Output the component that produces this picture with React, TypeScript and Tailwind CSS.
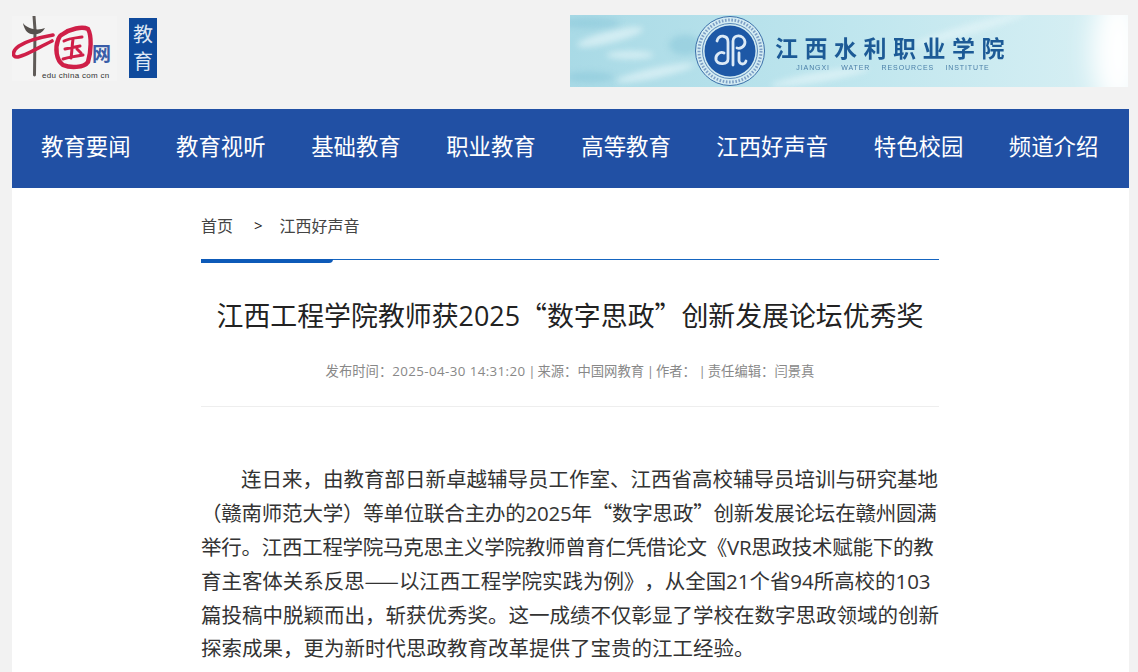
const NAV = ["教育要闻", "教育视听", "基础教育", "职业教育", "高等教育", "江西好声音", "特色校园", "频道介绍"];

const SANS = "font-['Segoe_UI','Open_Sans','Noto_Sans_CJK_SC',sans-serif]";
const CJK = "font-['Noto_Sans_CJK_SC',sans-serif]";

function ChinaLogo() {
  return (
    <svg width="105" height="65" viewBox="12 16 105 65" className="block">
      {/* grey post and hat */}
      <path d="M34 16 L35 30 L34.5 75" stroke="#5f5a57" strokeWidth="3" fill="none" strokeLinecap="round" />
      <path d="M23 23 C27 29 38 31 45 28 C42 34 36 35 31 34 C27 33 24 29 23 23Z" fill="#55504d" />
      {/* red brush sweep */}
      <path d="M53 35 C42 37 28 40 19 46 C12 51 12 57 17 57 C23 57 34 50 52 41" stroke="#cf1f48" strokeWidth="3.6" fill="none" strokeLinecap="round" />
      {/* red seal square */}
      <path d="M63 34 C70 29 82 26 88 29 C92 36 91 52 88 62 C84 68 70 68 63 65 C56 60 55 48 58 40 C59 37 60 35 63 34" stroke="#cf1f48" strokeWidth="4.4" fill="none" strokeLinecap="round" />
      <path d="M64 41 C70 38 76 38 82 37 M73 39 C72 46 72 52 71 58 M65 49 L80 46 M63 59 C70 57 76 56 83 55 M77 49 L81 53" stroke="#cf1f48" strokeWidth="3" fill="none" strokeLinecap="round" />
    </svg>
  );
}

function Seal() {
  return (
    <svg width="72" height="72" viewBox="0 0 72 72" className="block shrink-0">
      <circle cx="36" cy="36" r="34.5" fill="#d4ecf3" stroke="#3a6ea8" strokeWidth="1" />
      <circle cx="36" cy="36" r="31" fill="none" stroke="#7d9fc6" strokeWidth="3" strokeDasharray="1.6 1.6" />
      <circle cx="36" cy="36" r="27.5" fill="none" stroke="#3a6ea8" strokeWidth="0.8" />
      <circle cx="36" cy="36" r="25.5" fill="#1d58a6" />
      <path
        d="M23 26 C25 19 34 20 34 27 L34 44 C34 50 24 50 22 45 C21 40 26 36 30 38 M39 50 L39 26 C39 19 50 19 51 27 C51 32 46 34 43 33 M45 38 L45 46 C46 50 51 50 52 46"
        stroke="#dceaf6"
        strokeWidth="2.8"
        fill="none"
        strokeLinecap="round"
      />
    </svg>
  );
}

function Banner() {
  return (
    <div className="relative w-[558px] h-[72px] overflow-hidden bg-gradient-to-r from-[#a9dae6] via-[#bfe6ee] to-[#d9f0f4]">
      <svg width="558" height="72" viewBox="0 0 558 72" className="absolute inset-0">
        <defs>
          <filter id="soft">
            <feGaussianBlur stdDeviation="3" />
          </filter>
          <filter id="softer" x="-100%" y="-50%" width="300%" height="200%">
            <feGaussianBlur stdDeviation="12" />
          </filter>
        </defs>
        <g filter="url(#soft)" fill="#e4f5f8" opacity="0.7">
          <ellipse cx="40" cy="22" rx="34" ry="6" transform="rotate(-14 40 22)" />
          <ellipse cx="85" cy="58" rx="40" ry="5" transform="rotate(-12 85 58)" />
          <ellipse cx="60" cy="40" rx="24" ry="4" />
          <ellipse cx="250" cy="62" rx="50" ry="5" transform="rotate(-10 250 62)" />
          <ellipse cx="400" cy="14" rx="60" ry="5" transform="rotate(-16 400 14)" />
        </g>
        <g filter="url(#soft)" fill="#86c5d8" opacity="0.5">
          <ellipse cx="20" cy="8" rx="30" ry="5" />
          <ellipse cx="115" cy="30" rx="16" ry="10" />
          <ellipse cx="20" cy="62" rx="24" ry="5" />
        </g>
        <ellipse cx="548" cy="36" rx="26" ry="60" fill="#ffffff" filter="url(#softer)" />
      </svg>
      <div className="relative flex items-center h-full pl-[124px] gap-[9px]">
        <Seal />
        <div className="flex flex-col items-center pt-[3px]">
          <div className={`text-[23px] leading-[28px] font-semibold tracking-[6.5px] text-[#1c5a96] whitespace-nowrap ${CJK}`}>
            江西水利职业学院
          </div>
          <div className="mt-[2px] text-[7px] leading-[10px] tracking-[0.9px] text-[#4a7fa8] font-['Liberation_Sans',sans-serif] whitespace-pre">
            JIANGXI    WATER    RESOURCES    INSTITUTE
          </div>
        </div>
      </div>
    </div>
  );
}

function Sep() {
  return <span className="tracking-[-0.8px]"> | </span>;
}

export default function App() {
  return (
    <div className={`h-[672px] flex flex-col overflow-hidden bg-[#f2f2f2] [text-spacing-trim:space-all] ${SANS}`}>
      <header className="flex justify-between items-start h-[109px] shrink-0 pl-[12px] pr-[10px] pt-[15px]">
        <div className="flex items-start">
          <div className="relative w-[105px] h-[65px] mt-[1px] bg-[#f4f4f4]">
            <ChinaLogo />
            <span className="absolute left-[80px] top-[27px] text-[19px] leading-[22px] font-bold text-[#3a5da8]">网</span>
            <span className="absolute left-[30px] top-[55px] text-[8px] leading-[9px] tracking-[0.3px] text-[#333] whitespace-pre font-['Liberation_Sans',sans-serif]">edu china com cn</span>
          </div>
          <div className="mt-[3px] ml-[12px] w-[28px] h-[60px] bg-[#0f4a9c] flex flex-col items-center justify-center text-[#dfe8f5] text-[20px] leading-[27px]">
            <span>教</span>
            <span>育</span>
          </div>
        </div>
        <Banner />
      </header>

      <main className="flex-1 mx-[12px] w-[1117px] bg-white">
        <nav className="h-[79px] bg-[#2150a4] flex items-center pl-[29px] pb-[4px] gap-[45.5px] text-white text-[22.4px]">
          {NAV.map((item) => (
            <a key={item} className="whitespace-nowrap">
              {item}
            </a>
          ))}
        </nav>

        <div className="w-[738px] ml-[189px]">
          <div className="flex items-center h-[71px] pt-[4px] text-[16px] text-[#444]">
            <span>首页</span>
            <span className="ml-[21px] text-[#222] text-[15px]">&gt;</span>
            <span className="ml-[17px]">江西好声音</span>
          </div>

          <div className="relative h-[1px] bg-[#1565c0]">
            <div className="absolute left-0 top-0 w-[132px] h-[4px] bg-[#0d5ab8] rounded-br-[4px]" />
          </div>

          <h1 className="mt-[36px] text-center text-[26.9px] leading-[38px] font-normal text-[#222]">
            江西工程学院教师获2025<span className={CJK}>“数字思政”</span>创新发展论坛优秀奖
          </h1>

          <div className="mt-[27px] pb-[26px] text-center text-[13.33px] leading-[18px] text-[#888] border-b border-[#eeeeee] whitespace-pre">
            发布时间：<span className="tracking-[0.4px]">2025-04-30 14:31:20</span>
            <Sep />
            来源：中国网教育
            <Sep />
            作者：
            <Sep />
            责任编辑：闫景真
          </div>

          <p className="mt-[56px] w-[750px] text-[20.5px] leading-[33.4px] text-[#333] indent-[40px] m-0">
            连日来，由教育部日新卓越辅导员工作室、江西省高校辅导员培训与研究基地<br />
            <span className="tracking-[-0.22px]">
              （赣南师范大学）等单位联合主办的2025年<span className={CJK}>“数字思政”</span>创新发展论坛在赣州圆满
            </span>
            <br />
            <span className="tracking-[-0.27px]">举行。江西工程学院马克思主义学院教师曾育仁凭借论文《VR思政技术赋能下的教</span>
            <br />
            <span className="tracking-[-0.05px]">
              育主客体关系反思<span className={CJK}>——</span>以江西工程学院实践为例》，从全国21个省94所高校的103
            </span>
            <br />
            篇投稿中脱颖而出，斩获优秀奖。这一成绩不仅彰显了学校在数字思政领域的创新<br />
            探索成果，更为新时代思政教育改革提供了宝贵的江工经验。
          </p>
        </div>
      </main>
    </div>
  );
}
